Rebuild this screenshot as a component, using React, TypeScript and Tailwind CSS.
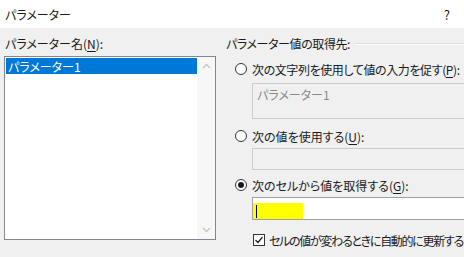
const font = "[font-family:'Noto_Sans_CJK_JP','Noto_Sans',sans-serif] [font-feature-settings:'palt']";

const Radio = ({ checked }: { checked?: boolean }) => (
  <div className="w-[12px] h-[12px] rounded-full border border-[#333333] bg-white flex items-center justify-center shrink-0">
    {checked && <div className="w-[6px] h-[6px] rounded-full bg-[#1a1a1a]" />}
  </div>
);

const Mn = ({ c }: { c: string }) => <span className="underline underline-offset-2">{c}</span>;

const App = () => {
  return (
    <div className={`w-[464px] h-[257px] flex flex-col overflow-hidden text-[12px] leading-[15px] text-[#1a1a1a] ${font}`}>
      {/* title bar */}
      <div className="h-[28px] bg-white flex items-center justify-between pl-[5px] pr-[14px] shrink-0">
        <span>パラメーター</span>
        <span className="text-[13px]">?</span>
      </div>

      <div className="flex-1 bg-[#f0f0f0] flex pt-[8px]">
        {/* left column */}
        <div className="w-[216px] pl-[4px] flex flex-col shrink-0">
          <div className="pl-[1px] h-[15px]">
            パラメーター名(<Mn c="N" />):
          </div>
          <div className="mt-[5px] h-[184px] border border-[#828790] bg-white flex">
            <div className="flex-1 pt-[1px] pl-[1px]">
              <div className="h-[16px] bg-[#0078d7] text-white pl-[2px] flex items-center">パラメーター1</div>
            </div>
            <div className="w-[18px] bg-[#f7f7f7] flex flex-col items-center justify-between py-[6px]">
              <svg width="9" height="6" viewBox="0 0 9 6">
                <path d="M1 5 L4.5 1.5 L8 5" fill="none" stroke="#c4c4c4" strokeWidth="1.3" />
              </svg>
              <svg width="9" height="6" viewBox="0 0 9 6">
                <path d="M1 1 L4.5 4.5 L8 1" fill="none" stroke="#c4c4c4" strokeWidth="1.3" />
              </svg>
            </div>
          </div>
        </div>

        {/* right column */}
        <div className="flex-1 pl-[10px] flex flex-col min-w-0">
          <div className="h-[15px] flex items-center">
            <span className="whitespace-nowrap tracking-[-0.4px]">パラメーター値の取得先:</span>
            <div className="flex-1 ml-[5px] h-[2px] border-t border-[#dcdcdc] border-b border-b-white" />
          </div>

          <div className="mt-[10px] h-[16px] pl-[9px] flex items-center gap-[5px] whitespace-nowrap">
            <Radio />
            <span className="tracking-[-0.4px]">次の文字列を使用して値の入力を促す(<Mn c="P" />):</span>
          </div>
          <div className="mt-[6px] ml-[26px] w-[240px] h-[36px] border border-[#cccccc] bg-[#f0f0f0] text-[#8a8a8a] pl-[4px] pt-[3px]">
            パラメーター1
          </div>

          <div className="mt-[9px] h-[16px] pl-[9px] flex items-center gap-[5px] whitespace-nowrap">
            <Radio />
            <span>次の値を使用する(<Mn c="U" />):</span>
          </div>
          <div className="mt-[4px] ml-[26px] w-[240px] h-[22px] border border-[#cccccc] bg-[#f0f0f0]" />

          <div className="mt-[7px] h-[16px] pl-[9px] flex items-center gap-[5px] whitespace-nowrap">
            <Radio checked />
            <span>次のセルから値を取得する(<Mn c="G" />):</span>
          </div>
          <div className="mt-[4px] ml-[26px] w-[240px] h-[23px] border border-[#a0a0a0] bg-white flex items-end">
            <div className="w-[50px] h-[16px] bg-[#ffff00] flex items-center pl-[3px]">
              <div className="w-[1px] h-[13px] bg-black" />
            </div>
          </div>

          <div className="mt-[12px] h-[16px] pl-[27px] flex items-center gap-[4px] whitespace-nowrap">
            <div className="w-[12px] h-[12px] border border-[#333333] bg-white flex items-center justify-center shrink-0">
              <svg width="10" height="10" viewBox="0 0 10 10">
                <path d="M1.5 5 L4 7.5 L8.5 2" fill="none" stroke="#1a1a1a" strokeWidth="1.2" />
              </svg>
            </div>
            <span className="tracking-[-1.3px]">セルの値が変わるときに自動的に更新する</span>
          </div>
        </div>
      </div>
    </div>
  );
};

export default App;
